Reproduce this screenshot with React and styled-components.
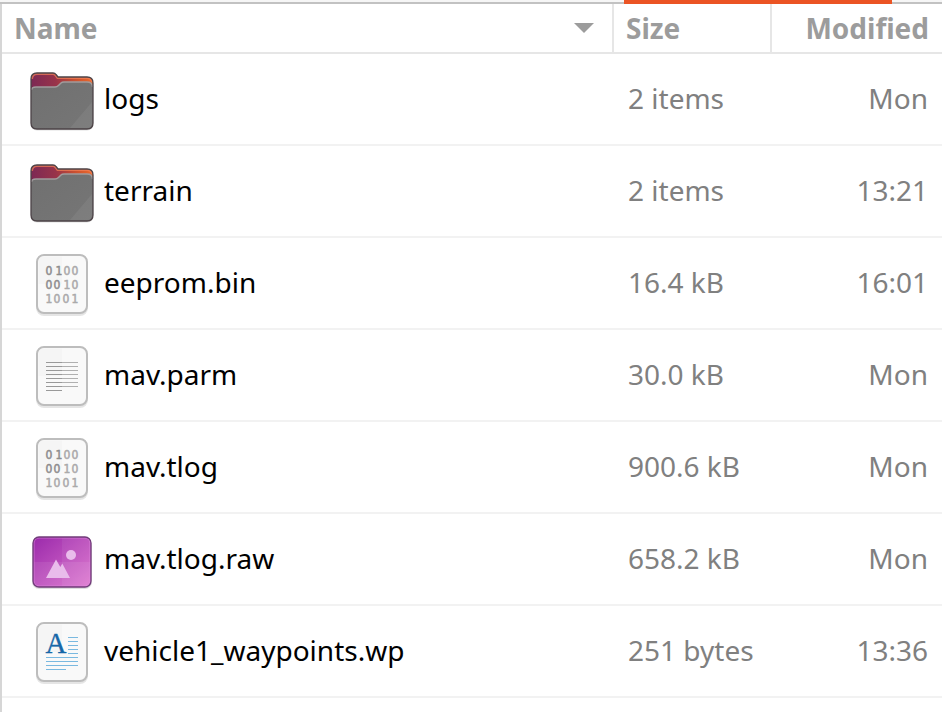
import React from "react";
import styled, { createGlobalStyle } from "styled-components";

const GlobalStyle = createGlobalStyle`
  *, *::before, *::after { box-sizing: border-box; }
  body {
    margin: 0;
    background: #fff;
    font-family: "Noto Sans", "Open Sans", sans-serif;
  }
`;

const Page = styled.div`
  display: flex;
  flex-direction: column;
  min-height: 100vh;
`;

const TabStrip = styled.div`
  display: flex;
  justify-content: flex-end;
  height: 4px;
  padding-right: 50px;
  background: #f6f6f6;
  box-shadow: inset 0 -2px #c2c2c2;
`;

const ActiveTab = styled.div`
  width: 268px;
  background: #eb5424;
`;

const Pane = styled.main`
  flex: 1;
  border-left: 2px solid #d6d6d6;
`;

const FileTable = styled.table`
  width: 100%;
  table-layout: fixed;
  border-collapse: separate;
  border-spacing: 0;
`;

const Column = styled.col`
  width: ${(p) => p.$width || "auto"};
`;

const HeadCell = styled.th`
  height: 50px;
  padding: 0;
  border-bottom: 2px solid #e6e6e6;
  border-right: ${(p) => (p.$last ? "0" : "2px solid #e6e6e6")};
`;

const SortButton = styled.button`
  display: flex;
  align-items: center;
  justify-content: ${(p) => p.$justify || "flex-start"};
  width: 100%;
  height: 48px;
  padding: 0 13px 0 12px;
  border: 0;
  background: transparent;
  color: #9c9c9c;
  font: bold 28px/48px "Noto Sans", "Open Sans", sans-serif;
  cursor: pointer;
`;

const SortArrow = styled.svg`
  width: 20px;
  height: 10px;
  margin-right: 5px;
`;

const Row = styled.tr`
  &:hover { background: #fafafa; }
`;

const Cell = styled.td`
  height: 92px;
  padding: 0 14px 2px;
  border-bottom: 2px solid #f2f2f2;
  color: #808080;
  font-size: 28px;
  line-height: 40px;
  text-align: ${(p) => p.$align || "left"};
  white-space: nowrap;
`;

const NameCell = styled(Cell)`
  padding: 0 28px 2px;
  color: #000;
`;

const FileLabel = styled.div`
  display: flex;
  align-items: center;
  gap: 10px;
`;

const Icon = styled.svg.attrs({ viewBox: "0 -4 64 68", "aria-hidden": true })`
  flex: none;
  width: 64px;
  height: 68px;
`;

const FolderIcon = () => (
  <Icon>
    <defs>
      <linearGradient id="folderBack" x1="0" y1="0" x2="1" y2="0">
        <stop offset="0" stopColor="#7c2954" />
        <stop offset="0.4" stopColor="#98334a" />
        <stop offset="0.7" stopColor="#c94f30" />
        <stop offset="1" stopColor="#ec6a2b" />
      </linearGradient>
      <linearGradient id="folderFront" x1="0" y1="0" x2="1" y2="1">
        <stop offset="0" stopColor="#707070" />
        <stop offset="1" stopColor="#767676" />
      </linearGradient>
    </defs>
    <path d="M1 20V56Q1 62.500 7 62.500H57Q63 62.500 63 56V20Z" fill="#000" opacity="0.13" />
    <path d="M1 11Q1 5 7 5H23Q25 5 26 6.500L28 9H57Q63 9 63 15V55Q63 61 57 61H7Q1 61 1 55Z" fill="url(#folderBack)" />
    <path d="M2 11Q2.500 6 7 6H23Q24.500 6 25.500 7.500L27.500 10H57Q61.500 10 62 14" fill="none" stroke="#f3825a" strokeOpacity="0.7" strokeWidth="2" />
    <path d="M1 22Q1 19 6 19H25Q27 19 28.500 17.500L31 15Q32 14 34 14H57Q63 14 63 19V55Q63 61 57 61H7Q1 61 1 55Z" fill="url(#folderFront)" />
    <path d="M62 34V55Q62 60 57 60H40Z" fill="#fff" opacity="0.06" />
    <path d="M1.500 22Q1.500 19 6 19H25Q27 19 28.500 17.500L31 15Q32 14 34 14H57Q62.500 14 62.500 19" fill="none" stroke="#a09b9c" strokeWidth="1.500" />
    <path d="M1 11Q1 5 7 5H23Q25 5 26 6.500L28 9H57Q63 9 63 15V55Q63 61 57 61H7Q1 61 1 55Z" fill="none" stroke="#4c4347" strokeWidth="1.300" />
  </Icon>
);

const Sheet = ({ children }) => (
  <Icon>
    <rect x="6" y="5" width="52" height="59" rx="8" fill="#000" opacity="0.1" />
    <rect x="7" y="3" width="50" height="58" rx="7" fill="#f9f9f9" stroke="#bdbdbd" strokeWidth="2" />
    <path d="M8.500 32V10Q8.500 4.500 14 4.500H32V32Z" fill="#f5f5f5" />
    {children}
  </Icon>
);

const BinaryIcon = () => (
  <Sheet>
    <g fontFamily="DejaVu Sans Condensed, DejaVu Sans" fontSize="12" fill="#aaaaaa" stroke="#aaaaaa" strokeWidth="0.500" textAnchor="middle">
      <text x="19 29 37 45" y="23"><tspan fill="#8d8d8d" stroke="#8d8d8d">01</tspan>00</text>
      <text x="19 27 37 45" y="37"><tspan fill="#8d8d8d" stroke="#8d8d8d">00</tspan>10</text>
      <text x="19 27 36 45" y="51">1001</text>
    </g>
  </Sheet>
);

const TextIcon = () => (
  <Sheet>
    <path d="M16 18.500H32M16 22.500H32M16 26.500H32M16 30.500H32M16 34.500H32M16 38.500H32M16 42.500H32M16 46.500H32" stroke="#999" />
    <path d="M32 18.500H48M32 22.500H48M32 26.500H48M32 30.500H48M32 34.500H48M32 38.500H48M32 42.500H48" stroke="#b0b0b0" />
  </Sheet>
);

const WriterIcon = () => (
  <Sheet>
    <text x="26" y="33" textAnchor="middle" fontFamily="Liberation Serif" fontSize="29" fill="#1767a8" stroke="#1767a8" strokeWidth="0.300">A</text>
    <path d="M38 17.500H48M38 21.500H48M38 25.500H48M38 29.500H48M38 33.500H48M16 37.500H48M16 41.500H48M16 45.500H48M16 49.500H36" stroke="#7ab9e0" />
  </Sheet>
);

const ImageIcon = () => (
  <Icon>
    <defs>
      <linearGradient id="imageFill" x1="0" y1="0" x2="1" y2="1">
        <stop offset="0" stopColor="#9a2aab" />
        <stop offset="1" stopColor="#dd72ce" />
      </linearGradient>
    </defs>
    <rect x="2" y="11" width="60" height="50" rx="7" fill="#000" opacity="0.13" />
    <rect x="3" y="9" width="58" height="50" rx="6" fill="url(#imageFill)" />
    <path d="M4 34H60V53Q60 58 55 58H9Q4 58 4 53Z" fill="#fff" opacity="0.08" />
    <path d="M32 10H55Q60 10 60 15V58H32Z" fill="#fff" opacity="0.06" />
    <rect x="4" y="10" width="56" height="48" rx="5" fill="none" stroke="#e08be0" strokeOpacity="0.6" />
    <rect x="3" y="9" width="58" height="50" rx="6" fill="none" stroke="#713c7a" strokeWidth="1.300" />
    <path d="M16 50L26 31.500L30.300 39L32.300 35.500L40 50Z" fill="#e9bceb" />
    <circle cx="41" cy="27" r="5" fill="#e9bceb" />
  </Icon>
);

const icons = {
  folder: FolderIcon,
  binary: BinaryIcon,
  text: TextIcon,
  image: ImageIcon,
  writer: WriterIcon,
};

const files = [
  { name: "logs", size: "2 items", modified: "Mon", kind: "folder" },
  { name: "terrain", size: "2 items", modified: "13:21", kind: "folder" },
  { name: "eeprom.bin", size: "16.4 kB", modified: "16:01", kind: "binary" },
  { name: "mav.parm", size: "30.0 kB", modified: "Mon", kind: "text" },
  { name: "mav.tlog", size: "900.6 kB", modified: "Mon", kind: "binary" },
  { name: "mav.tlog.raw", size: "658.2 kB", modified: "Mon", kind: "image" },
  { name: "vehicle1_waypoints.wp", size: "251 bytes", modified: "13:36", kind: "writer" },
];

export default function App() {
  return (
    <Page>
      <GlobalStyle />
      <TabStrip>
        <ActiveTab />
      </TabStrip>
      <Pane>
        <FileTable>
          <colgroup>
            <Column />
            <Column $width="158px" />
            <Column $width="170px" />
          </colgroup>
          <thead>
            <tr>
              <HeadCell scope="col" aria-sort="ascending">
                <SortButton type="button" $justify="space-between">
                  Name
                  <SortArrow viewBox="0 0 20 10" aria-hidden="true">
                    <path d="M0 0H20L10 10Z" fill="#9c9c9c" />
                  </SortArrow>
                </SortButton>
              </HeadCell>
              <HeadCell scope="col">
                <SortButton type="button">Size</SortButton>
              </HeadCell>
              <HeadCell scope="col" $last>
                <SortButton type="button" $justify="flex-end">Modified</SortButton>
              </HeadCell>
            </tr>
          </thead>
          <tbody>
            {files.map((file) => {
              const FileIcon = icons[file.kind];
              return (
                <Row key={file.name}>
                  <NameCell>
                    <FileLabel>
                      <FileIcon />
                      {file.name}
                    </FileLabel>
                  </NameCell>
                  <Cell>{file.size}</Cell>
                  <Cell $align="right">{file.modified}</Cell>
                </Row>
              );
            })}
          </tbody>
        </FileTable>
      </Pane>
    </Page>
  );
}
